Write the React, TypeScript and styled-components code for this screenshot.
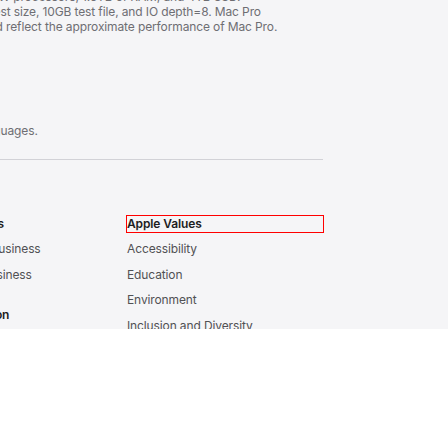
import React from "react"
import styled, { createGlobalStyle } from "styled-components"

const GlobalStyle = createGlobalStyle`
  body {
    margin: 0;
    background: #ffffff;
    font-family: Inter, "Liberation Sans", sans-serif;
  }
`

const Footer = styled.footer`
  height: 329px;
  overflow: hidden;
  background: #f5f5f7;
  font-size: 12px;
  letter-spacing: -0.12px;
`

const Content = styled.div`
  display: flex;
  flex-direction: column;
  width: 980px;
  margin: -11px 0 0 -657px;
`

const Notes = styled.section`
  display: flex;
  flex-direction: column;
  gap: 11px;
  color: #6e6e73;
  line-height: 15px;
  white-space: nowrap;
`

const Note = styled.p`
  margin: 0;
`

const Divider = styled.div`
  height: 1px;
  margin-top: 21px;
  background: #d2d2d7;
`

const Directory = styled.nav`
  display: grid;
  grid-template-columns: repeat(5, 196px);
  padding-top: 56px;
`

const Column = styled.div`
  display: flex;
  flex-direction: column;
  gap: 24px;
`

const Heading = styled.h3<{ $selected?: boolean }>`
  margin: 0 0 9px;
  font-size: 12px;
  line-height: 16px;
  font-weight: 600;
  color: #1d1d1f;
  outline: ${(p) => (p.$selected ? "1px solid #ff0000" : "none")};
`

const Links = styled.ul`
  display: flex;
  flex-direction: column;
  gap: 9.6px;
  list-style: none;
  margin: 0;
  padding: 0;
`

const Item = styled.li`
  line-height: 16px;
`

const Link = styled.a`
  color: #515154;
  text-decoration: none;
`

interface Group {
  title: string
  links: string[]
  selected?: boolean
}

const columns: Group[][] = [
  [{ title: "Shop and Learn", links: ["Store", "Mac", "iPad", "iPhone", "Watch", "AirPods"] }],
  [
    { title: "Account", links: ["Manage Your Apple ID", "Apple Store Account", "iCloud.com"] },
    { title: "Entertainment", links: ["Apple One", "Apple TV+"] },
  ],
  [{ title: "Apple Store", links: ["Find a Store", "Genius Bar", "Today at Apple"] }],
  [
    { title: "For Business", links: ["Apple and Business", "Shop for Business"] },
    { title: "For Education", links: ["Apple and Education", "Shop for K-12", "Shop for College"] },
  ],
  [
    {
      title: "Apple Values",
      selected: true,
      links: ["Accessibility", "Education", "Environment", "Inclusion and Diversity", "Privacy", "Racial Equity and Justice"],
    },
  ],
]

const App = () => (
  <>
    <GlobalStyle />
    <Footer>
      <Content>
        <Notes>
          <Note>
            Testing conducted by Apple in November 2019 using preproduction Mac Pro systems with 2.5GHz 28-core Intel Xeon W processors, 1.5TB of RAM, and 4TB SSD.
            <br />
            Testing conducted by Apple in November 2019 using production Mac Pro systems. Tested with FIO 3.16, 1024KB request size, 10GB test file, and IO depth=8. Mac Pro
            <br />
            systems configured with 28-core Intel Xeon W. Performance tests are conducted using specific computer systems and reflect the approximate performance of Mac Pro.
          </Note>
          <Note>Battery life varies by use and configuration. See apple.com/batteries for more information.</Note>
          <Note>Trade-in values vary based on the condition, year, and configuration of your device.</Note>
          <Note>Apple Pay is a service provided by Apple Payments Services LLC.</Note>
          <Note>
            Features are subject to change. Some features, applications, and services may not be available in all regions or all languages.
          </Note>
        </Notes>
        <Divider />
        <Directory>
          {columns.map((groups, i) => (
            <Column key={i}>
              {groups.map((g) => (
                <div key={g.title}>
                  <Heading $selected={g.selected}>{g.title}</Heading>
                  <Links>
                    {g.links.map((l) => (
                      <Item key={l}>
                        <Link href="#">{l}</Link>
                      </Item>
                    ))}
                  </Links>
                </div>
              ))}
            </Column>
          ))}
        </Directory>
      </Content>
    </Footer>
  </>
)

export default App
